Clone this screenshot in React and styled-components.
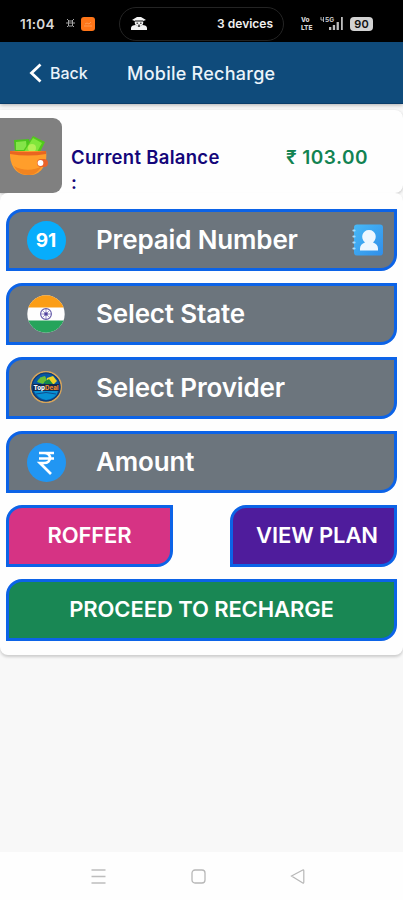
import React from 'react';
import styled, { createGlobalStyle } from 'styled-components';

const GlobalStyle = createGlobalStyle`
  * {
    box-sizing: border-box;
  }

  body {
    margin: 0;
    background-color: #f8f8f8;
    font-family: Inter, 'Liberation Sans', sans-serif;
  }

  button {
    font-family: inherit;
  }
`;

const Screen = styled.div`
  display: flex;
  flex-direction: column;
  width: 100%;
  height: 900px;
  overflow: hidden;
`;

const StatusBar = styled.div`
  display: flex;
  align-items: center;
  height: 42px;
  padding: 5px 30px 0 20px;
  background-color: #000;
  color: #d8d8d8;
`;

const Clock = styled.span`
  width: 45px;
  font-size: 13.5px;
  font-weight: 600;
  letter-spacing: 0.2px;
`;

const Notifications = styled.div`
  display: flex;
  align-items: center;
  gap: 5px;
  width: 54px;
`;

const DevicePill = styled.div`
  display: flex;
  align-items: center;
  justify-content: space-between;
  width: 165px;
  height: 34px;
  padding: 0 10px;
  border: 1px solid #242424;
  border-radius: 17px;
  color: #f0f0f0;
  font-size: 12px;
  font-weight: 600;
  white-space: nowrap;
`;

const Signals = styled.div`
  display: flex;
  align-items: center;
  margin-left: 17px;
`;

const Lte = styled.div`
  display: flex;
  flex-direction: column;
  width: 19px;
  font-size: 6.5px;
  font-weight: 800;
  line-height: 8px;
`;

const Battery = styled.div`
  width: 23px;
  height: 14px;
  margin-left: 5px;
  border-radius: 4px;
  background-color: #d2d2d2;
  color: #111;
  font-size: 11px;
  font-weight: 600;
  line-height: 14px;
  text-align: center;
`;

const Header = styled.header`
  display: flex;
  align-items: center;
  height: 62px;
  padding: 1px 0 0 29px;
  background-color: #0f4b7b;
  border-bottom: 1px solid #093c69;
  box-shadow: 0 1px 4px rgba(0, 0, 0, 0.3);
  color: #eaf3fa;
  z-index: 1;
`;

const BackButton = styled.button`
  display: flex;
  align-items: center;
  gap: 8px;
  width: 98px;
  padding: 0;
  border: none;
  background: none;
  color: inherit;
  font-size: 16px;
  font-weight: 500;
`;

const Title = styled.h1`
  margin: 0;
  font-size: 18px;
  font-weight: 500;
  letter-spacing: 0.25px;
`;

const Content = styled.main`
  flex: 1;
  padding-top: 6px;
`;

const BalanceCard = styled.section`
  display: flex;
  height: 83px;
  padding-top: 8px;
  background-color: #fefefe;
  border-radius: 0 8px 8px 0;
  box-shadow: 0 1px 3px rgba(0, 0, 0, 0.22);
`;

const WalletTile = styled.div`
  width: 62px;
  height: 75px;
  padding: 17px 0 0 9px;
  border-radius: 0 9px 9px 0;
  background-color: #808080;
`;

const BalanceLabel = styled.div`
  width: 215px;
  padding: 27px 52px 0 9px;
  color: #14067a;
  font-size: 18.5px;
  font-weight: 600;
  line-height: 25px;
  letter-spacing: 0.3px;
`;

const BalanceAmount = styled.div`
  padding: 27px 0 0 9px;
  color: #128352;
  font-size: 19px;
  font-weight: 600;
  line-height: 25px;
  letter-spacing: 0.45px;
  white-space: nowrap;
`;

const FormCard = styled.section`
  display: flex;
  flex-direction: column;
  gap: 12px;
  height: 462px;
  padding: 16px 6px 0;
  background-color: #fefefe;
  border-radius: 8px;
  box-shadow: 0 2px 3px rgba(0, 0, 0, 0.18);
`;

const Leaf = styled.button`
  display: flex;
  align-items: center;
  height: 62px;
  flex-shrink: 0;
  padding: 0 0 3px;
  border: 3px solid #0c63e7;
  border-radius: 16px 0 16px 0;
  color: #fff;
`;

const Field = styled(Leaf)`
  padding: 0 10px 0 17px;
  background-color: #6c757d;
  font-size: 26px;
  font-weight: 600;
`;

const FieldIcon = styled.span`
  display: flex;
  justify-content: center;
  width: 40px;
`;

const FieldLabel = styled.span`
  flex: 1;
  padding: 0 0 2px 30px;
  letter-spacing: -0.15px;
  text-align: left;
`;

const CodeBadge = styled.span`
  width: 39px;
  height: 39px;
  border-radius: 50%;
  background-color: #07adfc;
  font-size: 19px;
  font-weight: 700;
  line-height: 39px;
  text-align: center;
`;

const ButtonRow = styled.div`
  display: flex;
  justify-content: space-between;
`;

const Action = styled(Leaf)`
  justify-content: center;
  width: ${props => props.$width || 'auto'};
  padding-left: ${props => props.$indent || '0'};
  background-color: ${props => props.$color};
  font-size: 22px;
  font-weight: 600;
  letter-spacing: -0.1px;
  white-space: nowrap;
`;

const NavBar = styled.nav`
  display: flex;
  align-items: center;
  justify-content: space-between;
  height: 48px;
  padding: 0 98px 0 91px;
  background-color: #fefefe;
`;

const PawIcon = () => (
  <svg width="11" height="13" viewBox="0 0 11 13" fill="none" stroke="#a5a5a5">
    <path d="M2 2l2 2M1 6h2M2 10l2-2M9 2L7 4M10 6H8M9 10L7 8" />
    <path d="M3.5 4h4v5h-4zM4 6h3" />
  </svg>
);

const OrangeAppIcon = () => (
  <svg width="14" height="14" viewBox="0 0 14 14">
    <rect width="14" height="14" rx="3" fill="#ff7518" />
    <path d="M3 9h8M4 7l2-1 2 1 2-2" stroke="#ff9a50" fill="none" />
  </svg>
);

const HotspotIcon = () => (
  <svg width="18" height="15" viewBox="0 0 18 15" fill="#f4f4f4">
    <path d="M1 14v-2c0-2 2-3 5-3l3 2 3-2c3 0 5 1 5 3v2z" />
    <path d="M2 4L7 1h4l5 3-3 1c1 3-1 5-4 5s-5-2-4-5z" />
    <path d="M5 5h8M6.5 7.2h1.6M10 7.2h1.6M8 9.2h2" stroke="#111" />
  </svg>
);

const SignalIcon = () => (
  <svg width="25" height="15" viewBox="0 0 25 15" fill="#bdbdbd">
    <path d="M1 1v3h2.5M3.5 1v5" fill="none" stroke="#bdbdbd" strokeWidth=".9" />
    <path d="M9 11h2.3v3H9zM12.8 9h2.3v5h-2.3zM16.6 6h2.3v8h-2.3zM21 1h1.8v13H21z" />
    <text x="5" y="6" fontSize="6.5" fontWeight="800">5G</text>
  </svg>
);

const ChevronIcon = () => (
  <svg width="13" height="20" viewBox="0 0 13 20" fill="none" stroke="#fff" strokeWidth="2.8">
    <path d="M11.5 1.5L2.5 10l9 8.5" />
  </svg>
);

const WalletIcon = () => (
  <svg width="40" height="42" viewBox="0 0 40 42">
    <path d="M5 5l15-1 3 14H6z" fill="#4bc51d" />
    <path d="M7 7l10-1 1 9H7z" fill="#85e449" />
    <path d="M24 1l12 6-6 12H12z" fill="#51c91b" />
    <path d="M24 3l9 5-5 9H15z" fill="#80e63b" />
    <circle cx="23" cy="13" r="4" fill="#b4ef57" />
    <path d="M1 16h36c2 13-5 23-14 24h-7C7 39 0 30 1 16z" fill="#ff9e2b" />
    <path d="M1 16q18 2 36 0v3q-18 3-36 0z" fill="#e96520" />
    <path d="M5 31c8 5 20 5 28 0-4 6-8 9-13 9-7 0-12-3-15-9z" fill="#f28420" />
    <rect x="28" y="24" width="11" height="8" rx="4" fill="#e8632a" />
    <circle cx="31.5" cy="28" r="2.9" fill="#fff" />
  </svg>
);

const FlagIcon = () => (
  <svg width="38" height="38" viewBox="0 0 38 38">
    <clipPath id="flagCircle"><circle cx="19" cy="19" r="18.7" /></clipPath>
    <g clipPath="url(#flagCircle)">
      <path fill="#fefefe" d="M0 0h38v38H0z" />
      <path fill="#fb9d16" d="M0 0h38v12.5H0z" />
      <path fill="#26a45b" d="M0 25.5h38V38H0z" />
    </g>
    <g stroke="#6359a9" fill="none">
      <circle cx="19" cy="19" r="5.4" strokeWidth="1.1" />
      <path d="M19 14v10M14 19h10M15.5 15.5l7 7M22.5 15.5l-7 7" strokeWidth=".6" />
    </g>
    <circle cx="19" cy="19" r="1.8" fill="#51439e" />
  </svg>
);

const ProviderIcon = () => (
  <svg width="34" height="34" viewBox="0 0 34 34">
    <circle cx="17" cy="16" r="15.3" fill="#0757a3" stroke="#d6a45b" strokeWidth="1.6" />
    <circle cx="17" cy="16" r="14" fill="none" stroke="#163869" strokeWidth="1.2" />
    <path d="M5 20q12-5 24 0-2 8-12 9Q8 27 5 20z" fill="#0790d3" />
    <path d="M8 11q2-5 8-6l2 4-4 4zM11 6l6 1-3 3z" fill="#6abd34" />
    <path d="M18 7l6-2 4 5-4 4-6-3z" fill="#efd126" />
    <path d="M15 11l5-3 4 5-6 2z" fill="#158b47" />
    <path d="M4 13h26v7H4z" fill="#102950" />
    <text x="4.5" y="19" fontSize="6.2" fontWeight="800">
      <tspan fill="#fff">Top</tspan>
      <tspan fill="#ed872e">Deal</tspan>
    </text>
    <path d="M7 23q10-3 20 0" stroke="#104c8d" fill="none" />
  </svg>
);

const RupeeIcon = () => (
  <svg width="39" height="39" viewBox="0 0 39 39">
    <circle cx="19.5" cy="19.5" r="19.5" fill="#2196f3" />
    <path d="M12 10h15M12 15.5h15M12 10h5c8 0 8 10 0 10h-4l11 11" fill="none" stroke="#fff" strokeWidth="2.7" />
  </svg>
);

const ContactIcon = () => (
  <svg width="32" height="32" viewBox="0 0 32 32">
    <defs>
      <linearGradient id="bookBlue" x1="0" y1="0" x2="1" y2="1">
        <stop stopColor="#47b9f7" />
        <stop offset="1" stopColor="#318ee9" />
      </linearGradient>
    </defs>
    <rect x="2" y="0.5" width="29" height="31" rx="3" fill="url(#bookBlue)" />
    <path d="M1.5 6.5h1M1.5 12.5h1M1.5 18.5h1M1.5 24.5h1" stroke="#a7dbfa" strokeWidth="2.2" strokeLinecap="round" />
    <path d="M8 26.5v-2c0-3 2-5 5-6-5-4-3-12.5 4-12.5s9 8.500 4 12.500c3 1 5 3 5 6v2z" fill="#eef7ff" />
  </svg>
);

const MenuIcon = () => (
  <svg width="15" height="15" viewBox="0 0 15 15" stroke="#bdbdbd" strokeWidth="1.3">
    <path d="M0.5 1h14M0.5 7.5h14M0.5 14h14" />
  </svg>
);

const HomeIcon = () => (
  <svg width="15" height="15" viewBox="0 0 15 15" fill="none" stroke="#b7b7b7" strokeWidth="1.3">
    <rect x="1" y="1" width="13" height="13" rx="3" />
  </svg>
);

const NavBackIcon = () => (
  <svg width="15" height="15" viewBox="0 0 15 15" fill="none" stroke="#b7b7b7" strokeWidth="1.2">
    <path d="M12.8 1L1.5 7l11.3 7q1 .5 1-1V2q0-1.5-1-1z" />
  </svg>
);

const App = () => {
  return (
    <Screen>
      <GlobalStyle />
      <StatusBar>
        <Clock>11:04</Clock>
        <Notifications>
          <PawIcon />
          <OrangeAppIcon />
        </Notifications>
        <DevicePill>
          <HotspotIcon />
          3 devices
        </DevicePill>
        <Signals>
          <Lte>
            <span>Vo</span>
            <span>LTE</span>
          </Lte>
          <SignalIcon />
          <Battery>90</Battery>
        </Signals>
      </StatusBar>

      <Header>
        <BackButton>
          <ChevronIcon /> Back
        </BackButton>
        <Title>Mobile Recharge</Title>
      </Header>

      <Content>
        <BalanceCard>
          <WalletTile><WalletIcon /></WalletTile>
          <BalanceLabel>Current Balance :</BalanceLabel>
          <BalanceAmount>₹ 103.00</BalanceAmount>
        </BalanceCard>

        <FormCard>
          <Field>
            <FieldIcon><CodeBadge>91</CodeBadge></FieldIcon>
            <FieldLabel>Prepaid Number</FieldLabel>
            <ContactIcon />
          </Field>
          <Field>
            <FieldIcon><FlagIcon /></FieldIcon>
            <FieldLabel>Select State</FieldLabel>
          </Field>
          <Field>
            <FieldIcon><ProviderIcon /></FieldIcon>
            <FieldLabel>Select Provider</FieldLabel>
          </Field>
          <Field>
            <FieldIcon><RupeeIcon /></FieldIcon>
            <FieldLabel>Amount</FieldLabel>
          </Field>
          <ButtonRow>
            <Action $color="#d63384" $width="167px">ROFFER</Action>
            <Action $color="#4f1c9c" $width="167px" $indent="7px">VIEW PLAN</Action>
          </ButtonRow>
          <Action $color="#198754">PROCEED TO RECHARGE</Action>
        </FormCard>
      </Content>

      <NavBar>
        <MenuIcon />
        <HomeIcon />
        <NavBackIcon />
      </NavBar>
    </Screen>
  );
};

export default App;
